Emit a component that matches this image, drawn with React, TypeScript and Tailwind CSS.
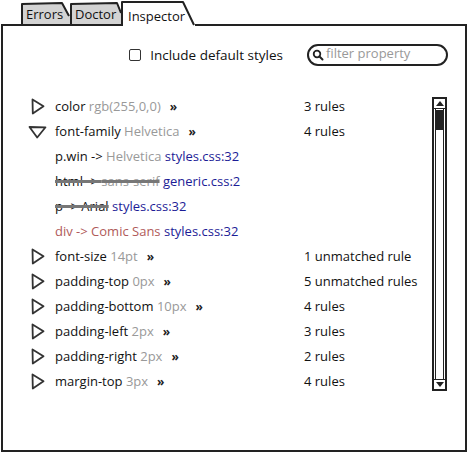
import React from "react";

type Row =
  | { kind: "prop"; name: string; value: string; rules: string; open?: boolean }
  | { kind: "sub"; content: React.ReactNode };

const Chev = () => <span className="ml-[9px] text-[12px] font-bold text-[#222]">»</span>;

const rows: Row[] = [
  { kind: "prop", name: "color", value: "rgb(255,0,0)", rules: "3 rules" },
  { kind: "prop", name: "font-family", value: "Helvetica", rules: "4 rules", open: true },
  {
    kind: "sub",
    content: (
      <>
        <span className="text-[#111]">p.win -&gt; </span>
        <span className="text-[#999]">Helvetica</span>{" "}
        <span className="text-[#1c1c96]">styles.css:32</span>
      </>
    ),
  },
  {
    kind: "sub",
    content: (
      <>
        <span className="line-through decoration-[3px] decoration-[#777]">
          <span className="text-[#111]">html -&gt; </span>
          <span className="text-[#999]">sans-serif</span>
        </span>{" "}
        <span className="text-[#1c1c96]">generic.css:2</span>
      </>
    ),
  },
  {
    kind: "sub",
    content: (
      <>
        <span className="line-through decoration-[3px] decoration-[#777] text-[#111]">p -&gt; Arial</span>{" "}
        <span className="text-[#1c1c96]">styles.css:32</span>
      </>
    ),
  },
  {
    kind: "sub",
    content: (
      <>
        <span className="text-[#b05a5a]">div -&gt; Comic Sans</span>{" "}
        <span className="text-[#1c1c96]">styles.css:32</span>
      </>
    ),
  },
  { kind: "prop", name: "font-size", value: "14pt", rules: "1 unmatched rule" },
  { kind: "prop", name: "padding-top", value: "0px", rules: "5 unmatched rules" },
  { kind: "prop", name: "padding-bottom", value: "10px", rules: "4 rules" },
  { kind: "prop", name: "padding-left", value: "2px", rules: "3 rules" },
  { kind: "prop", name: "padding-right", value: "2px", rules: "2 rules" },
  { kind: "prop", name: "margin-top", value: "3px", rules: "4 rules" },
];

const TriRight = () => (
  <svg width="16" height="17" viewBox="0 0 16 17">
    <path d="M2.5 1.5 L13.5 8.2 L2.8 15.5 Z" fill="none" stroke="#333" strokeWidth="1.8" strokeLinejoin="round" />
  </svg>
);

const TriDown = () => (
  <svg width="19" height="14" viewBox="0 0 19 14">
    <path d="M1.5 2 L17.5 2.3 L9.2 12.5 Z" fill="none" stroke="#333" strokeWidth="1.8" strokeLinejoin="round" />
  </svg>
);

function Tab({
  w,
  label,
  active,
  path,
  fillPath,
  textClass,
}: {
  w: string;
  label: string;
  active?: boolean;
  path: string;
  fillPath: string;
  textClass: string;
}) {
  return (
    <div className={`relative shrink-0 ${w} ${active ? "h-[26px]" : "h-[26px] border-b-2 border-[#222]"}`}>
      <svg className="absolute inset-0 h-full w-full" preserveAspectRatio="none">
        <path d={fillPath} fill={active ? "#fff" : "#d3d3d3"} />
        <path d={path} fill="none" stroke="#222" strokeWidth="2" strokeLinejoin="round" />
      </svg>
      <span className={`relative block text-[13px] leading-none text-[#111] ${textClass}`}>{label}</span>
    </div>
  );
}

export default function App() {
  return (
    <div className="w-[470px] h-[454px] bg-white font-['Open_Sans',sans-serif] overflow-hidden">
      {/* tab row */}
      <div className="ml-[1px] flex w-[466px] items-end">
        <div className="h-[26px] w-[20px] shrink-0 border-b-2 border-[#222]" />
        <Tab
          w="w-[49px]"
          label="Errors"
          path="M1 24 L1 4 L41 3 L48 16"
          fillPath="M1 24 L1 4 L41 3 L49 16 L49 24 Z"
          textClass="pl-[5px] pt-[8px]"
        />
        <Tab
          w="w-[51px]"
          label="Doctor"
          path="M1 24 L1 4 L47 3 L51 13"
          fillPath="M1 24 L1 4 L47 3 L51 13 L51 24 Z"
          textClass="pl-[5px] pt-[8px]"
        />
        <Tab
          w="w-[74px]"
          label="Inspector"
          active
          path="M1 26 L1 2 L62 2 L73 25"
          fillPath="M1 26 L1 2 L62 2 L74 26 Z"
          textClass="pl-[7px] pt-[10px]"
        />
        <div className="h-[26px] flex-1 border-b-2 border-[#222]" />
      </div>

      {/* panel */}
      <div className="ml-[1px] flex h-[426px] w-[466px] flex-col border-x-2 border-b-2 border-[#222]">
        {/* header */}
        <div className="flex items-center justify-end pr-[17px] pt-[18px]">
          <div className="h-[12px] w-[12px] rounded-[2px] border-[1.5px] border-[#333]" />
          <span className="ml-[9px] text-[13.5px] text-[#111]">Include default styles</span>
          <div className="ml-[24px] flex h-[22px] w-[141px] items-center rounded-full border-2 border-[#222] pl-[3px]">
            <svg width="12" height="12" viewBox="0 0 12 12">
              <circle cx="5" cy="5" r="3.3" fill="none" stroke="#222" strokeWidth="1.8" />
              <path d="M7.5 7.5 L10.5 10.5" stroke="#222" strokeWidth="2" strokeLinecap="round" />
            </svg>
            <span className="ml-[2px] text-[13px] text-[#999] leading-none -mt-[3px]">filter property</span>
          </div>
        </div>

        {/* list */}
        <div className="mt-[28px] flex">
          <div className="flex-1 pl-[27px]">
            {rows.map((r, i) => (
              <div key={i} className="grid h-[25px] grid-cols-[25px_249px_1fr] items-center text-[13px] text-[#111]">
                <div className="flex items-center">
                  {r.kind === "prop" ? r.open ? <span className="-ml-[2px] flex"><TriDown /></span> : <TriRight /> : null}
                </div>
                <div className="whitespace-nowrap">
                  {r.kind === "prop" ? (
                    <>
                      {r.name} <span className="text-[#999]">{r.value}</span>
                      <Chev />
                    </>
                  ) : (
                    r.content
                  )}
                </div>
                <div className="whitespace-nowrap">{r.kind === "prop" ? r.rules : ""}</div>
              </div>
            ))}
          </div>
          {/* scrollbar */}
          <div className="mr-[18px] mt-[3px] flex h-[294px] w-[15px] shrink-0 flex-col border-2 border-[#222]">
            <div className="flex h-[10px] items-center justify-center border-b-[1.5px] border-[#222]">
              <div className="h-0 w-0 border-x-[4px] border-b-[5px] border-x-transparent border-b-[#222]" />
            </div>
            <div className="flex flex-1 flex-col border-x-[1.5px] border-[#222] mx-[1px]">
              <div className="mx-auto mt-[1px] h-[20px] w-[7px] bg-[#222]" />
            </div>
            <div className="flex h-[10px] items-center justify-center border-t-[1.5px] border-[#222]">
              <div className="h-0 w-0 border-x-[4px] border-t-[5px] border-x-transparent border-t-[#222]" />
            </div>
          </div>
        </div>
      </div>
    </div>
  );
}
